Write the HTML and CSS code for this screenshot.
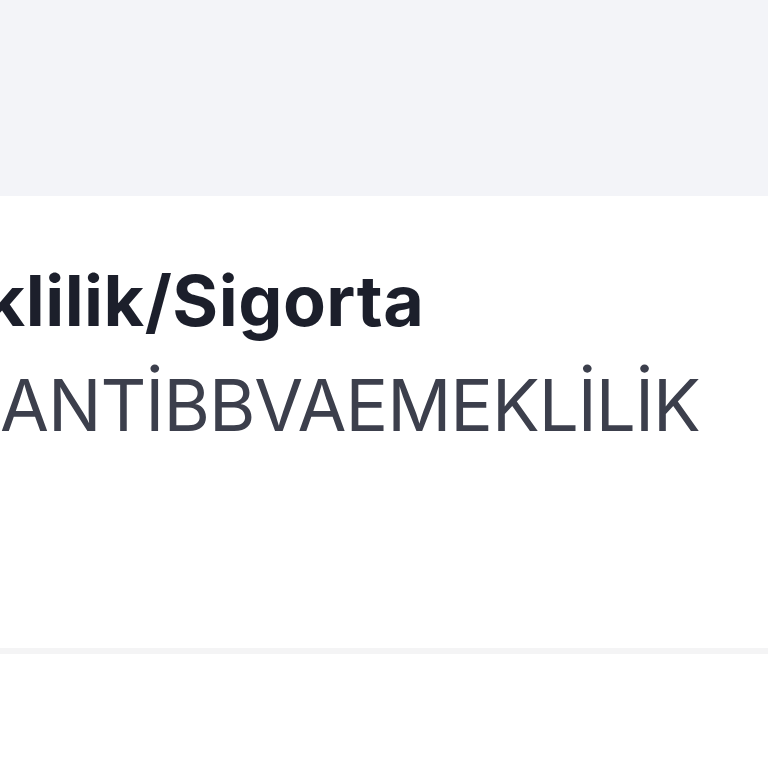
FILE: index.html
```html
<!DOCTYPE html>
<html lang="tr">
<head>
  <meta charset="UTF-8">
  <title>Emeklilik/Sigorta</title>
  <link rel="stylesheet" href="styles.css">
</head>
<body>

<div class="top-band"></div>

<section class="card">
  <h2 class="card-title">Emeklilik/Sigorta</h2>
  <p class="card-sub">GARANTİBBVAEMEKLİLİK</p>
</section>

<div class="divider"></div>

<section class="next-card"></section>

</body>
</html>
```

FILE: styles.css
```css
* {margin:0;padding:0;box-sizing:border-box}
html, body {
  width: 768px;
  height: 768px;
  overflow: hidden;
  background: #fff;
  font-family: Inter, "Noto Sans", sans-serif;
}
.top-band {
  height: 196px;
  background: #f3f4f8;
}
.card {
  height: 452px;
  background: #fff;
  padding-top: 63px;
  overflow: hidden;
  white-space: nowrap;
}
.card-title {
  font-size: 70px;
  font-weight: 700;
  line-height: 84px;
  color: #1c1f2b;
  margin-left: -165px;
  letter-spacing: 0.5px;
}
.card-sub {
  font-size: 71px;
  font-weight: 400;
  line-height: 108px;
  color: #3c3f4c;
  margin-top: 8px;
  margin-left: -143px;
  letter-spacing: -1px;
}
.divider {
  height: 6px;
  background: #f4f4f5;
}
.next-card {
  height: 120px;
  background: #fff;
}
```
